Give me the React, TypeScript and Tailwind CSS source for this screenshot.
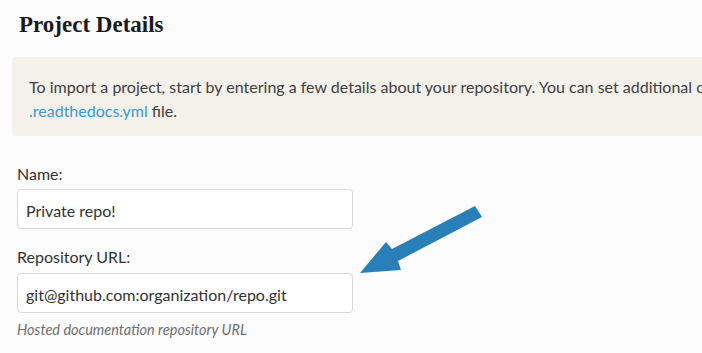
export default function App() {
  return (
    <div className="h-[353px] w-[702px] overflow-hidden bg-[#fcfcfc] font-['Lato','Liberation_Sans',sans-serif] text-[#404040]">
      <div className="w-[1000px] pl-[12px] pt-[9px]">
        <h1 className="pl-[7px] font-['Liberation_Serif',serif] text-[23px] font-bold leading-[32px] text-[#1a1a1a]">
          Project Details
        </h1>

        <div className="mt-[16px] rounded-[4px] bg-[#f4f2eb] pb-[13px] pl-[17px] pt-[18px] text-[16px] leading-[24px]">
          <p className="whitespace-nowrap">
            To import a project, start by entering a few details about your repository. You can set additional configuration
            options in your
          </p>
          <p className="whitespace-nowrap">
            <a className="text-[#3d97d3]" href="#">
              .readthedocs.yml
            </a>{" "}
            file.
          </p>
        </div>

        <form className="relative mt-[26px] w-[600px] pl-[5px]">
          <label className="block text-[16px] leading-[24px] text-[#333]">Name:</label>
          <input
            className="mt-[3px] block h-[40px] w-[336px] rounded-[4px] border border-[#d9d9d9] bg-white px-[8px] pt-[3px] text-[16px] text-[#333] outline-none"
            defaultValue="Private repo!"
          />

          <label className="mt-[16px] block text-[16px] leading-[24px] text-[#333]">Repository URL:</label>
          <input
            className="mt-[4px] block h-[40px] w-[336px] rounded-[4px] border border-[#d9d9d9] bg-white px-[8px] pt-[3px] text-[16px] text-[#333] outline-none"
            defaultValue="git@github.com:organization/repo.git"
          />
          <p className="mt-[7px] text-[14.5px] italic leading-[20px] text-[#6f6f6f]">Hosted documentation repository URL</p>

          {/* annotation arrow drawn over the form */}
          <svg className="absolute left-[-12px] top-[-162px]" width="702" height="353" viewBox="0 0 702 353">
            <polygon
              points="475,206 482,217 398,261 401,270 360,273 386,242 392,249"
              fill="#2980b9"
            />
          </svg>
        </form>
      </div>
    </div>
  );
}
